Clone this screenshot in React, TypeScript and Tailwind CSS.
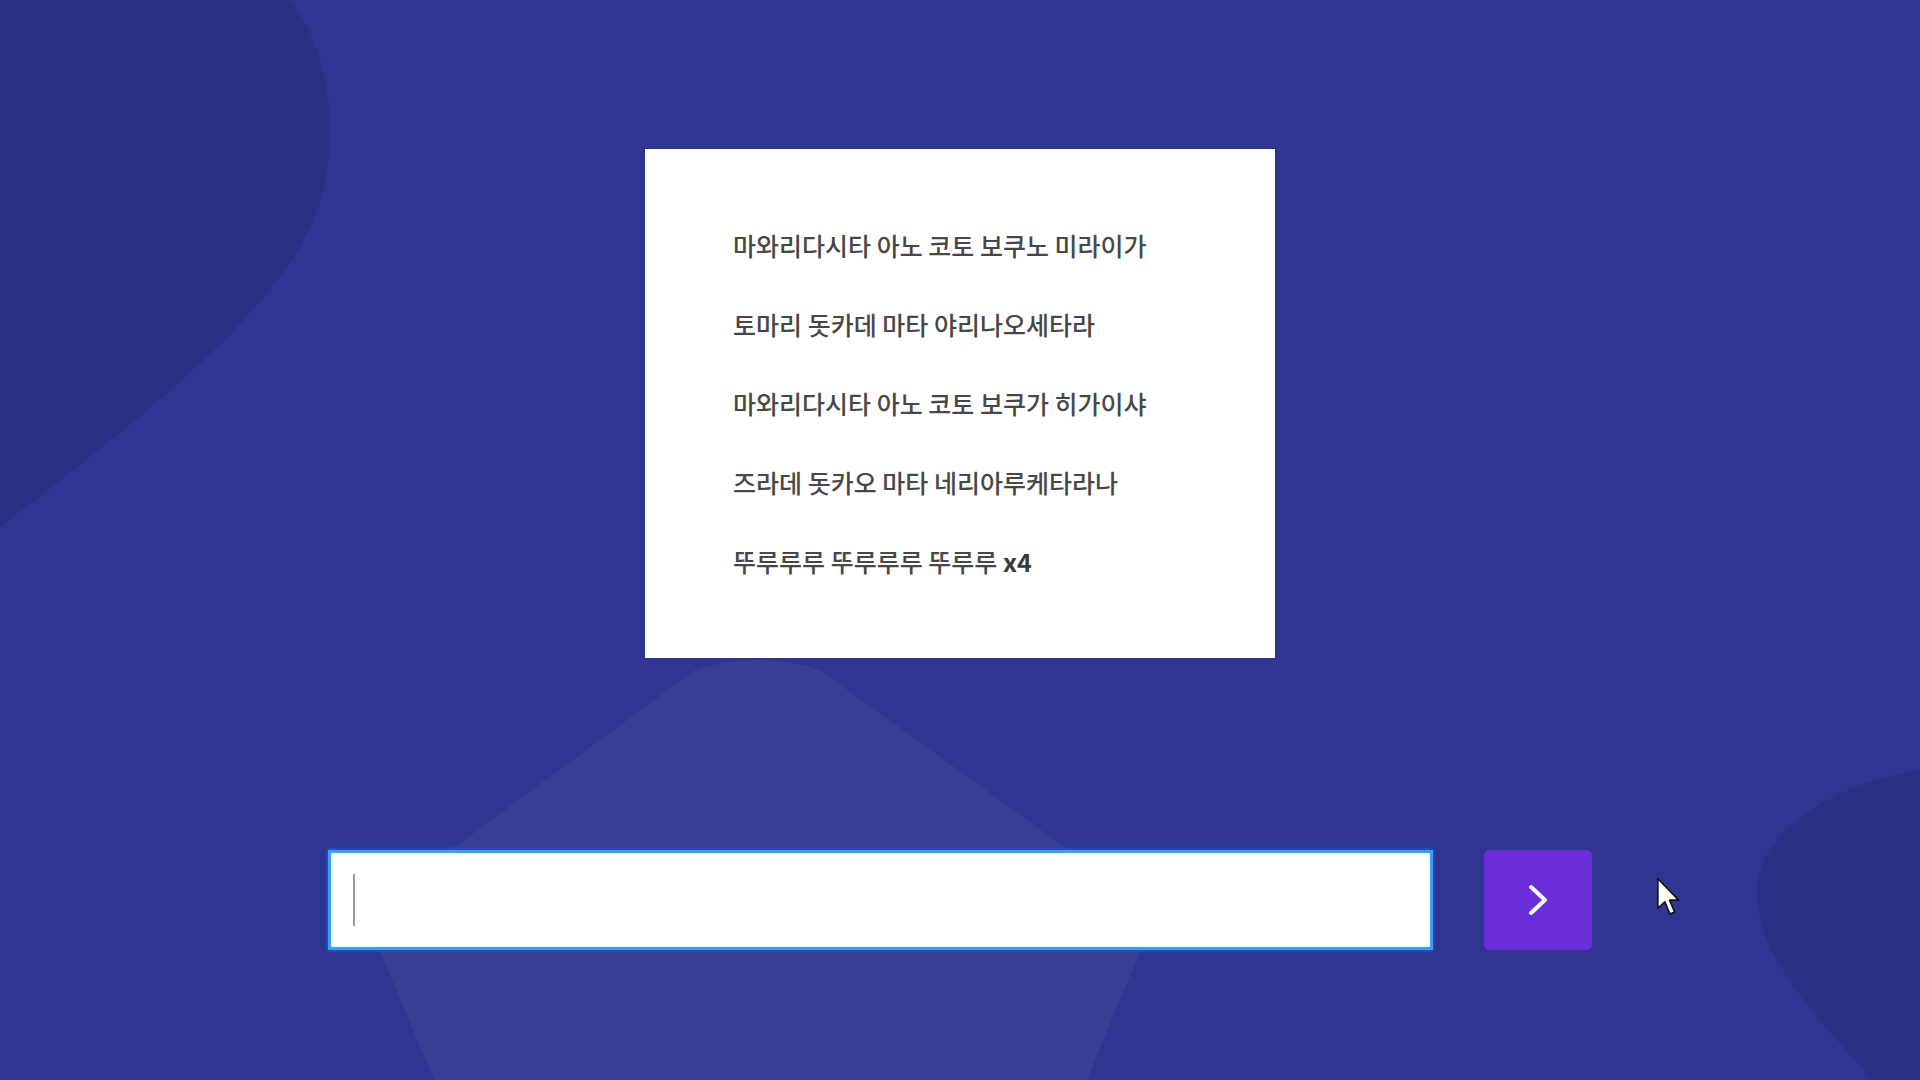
import { useState } from 'react';

const lyrics = [
  '마와리다시타 아노 코토 보쿠노 미라이가',
  '토마리 돗카데 마타 야리나오세타라',
  '마와리다시타 아노 코토 보쿠가 히가이샤',
  '즈라데 돗카오 마타 네리아루케타라나',
];

const Backdrop = () => (
  <svg
    className="absolute inset-0 h-full w-full"
    viewBox="0 0 1920 1080"
    preserveAspectRatio="none"
    aria-hidden
  >
    <path d="M0 0 H290 C322 40 342 115 322 195 C296 295 165 400 0 527 Z" fill="#2b3084" />
    <path
      d="M695 670 Q757 650 820 670 L1128 893 Q1150 913 1144 942 L1087 1080 L434 1080 L376 942 Q370 913 392 893 Z"
      fill="#3a3e94"
    />
    <path d="M1920 770 C1850 780 1760 822 1757 890 C1755 960 1830 1030 1872 1080 L1920 1080 Z" fill="#2b3084" />
  </svg>
);

const MousePointer = () => (
  <svg className="absolute left-[1656px] top-[877px]" width="28" height="44" viewBox="0 0 24 38" aria-hidden>
    <path
      d="M1.5 1.5 L1.5 27 L7.5 21.5 L12 32 L16 30.2 L11.6 20 L19.5 20 Z"
      fill="#ffffff"
      stroke="#111111"
      strokeWidth="1.4"
      strokeLinejoin="round"
    />
  </svg>
);

export default function App() {
  const [value, setValue] = useState('');

  return (
    <div
      className="relative h-screen w-full overflow-hidden bg-[#2f3590]"
      style={{ fontFamily: '"Noto Sans CJK KR", "Noto Sans", sans-serif' }}
    >
      <Backdrop />

      <div className="relative flex flex-col items-center pt-[149px]">
        <div className="flex h-[509px] w-[630px] flex-col bg-white pl-[88px] pt-[57px] text-[25px] font-medium leading-[79px] text-[#474747]">
          {lyrics.map((line) => (
            <p key={line} className="whitespace-nowrap">
              {line}
            </p>
          ))}
          <p className="whitespace-nowrap">
            뚜루루루 뚜루루루 뚜루루 <span className="font-bold text-[#3a3a3a]">x4</span>
          </p>
        </div>

        <div className="mt-[192px] flex items-center gap-[51px]">
          <div className="flex h-[100px] w-[1105px] items-center border-[3px] border-[#3f9cf2] bg-white pl-[22px] shadow-[0_0_3px_1px_#1c5fd0,inset_0_0_3px_#bfe9ff]">
            <span className="h-[52px] w-[2px] bg-[#9a9a9a]" />
            <input
              value={value}
              onChange={(e: React.ChangeEvent<HTMLInputElement>) => setValue(e.target.value)}
              className="h-full flex-1 bg-transparent px-2 text-[23px] text-[#333] caret-transparent outline-none"
            />
          </div>
          <button className="flex h-[100px] w-[108px] items-center justify-center rounded-[5px] bg-[#6a2ed8]">
            <svg width="22" height="34" viewBox="0 0 22 34" aria-hidden>
              <polyline
                points="4,4 18,17 4,30"
                fill="none"
                stroke="#ffffff"
                strokeWidth="4"
                strokeLinecap="round"
                strokeLinejoin="round"
              />
            </svg>
          </button>
        </div>
      </div>

      <MousePointer />
    </div>
  );
}
